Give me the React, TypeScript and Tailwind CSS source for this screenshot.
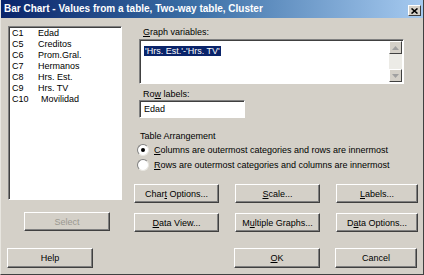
import type { ReactNode } from "react"

const columns = [
  { id: "C1", name: "Edad" },
  { id: "C5", name: "Creditos" },
  { id: "C6", name: "Prom.Gral." },
  { id: "C7", name: "Hermanos" },
  { id: "C8", name: "Hrs. Est." },
  { id: "C9", name: "Hrs. TV" },
  { id: "C10", name: "Movilidad" },
]

function Button({ children, className = "", disabled = false }: { children: ReactNode; className?: string; disabled?: boolean }) {
  return (
    <div
      className={`h-[19px] flex items-center justify-center border border-t-white border-l-white border-r-[#404040] border-b-[#404040] shadow-[inset_-1px_-1px_0_#808080] bg-[#d4d0c8] ${
        disabled ? "text-[#9a9890]" : "text-black"
      } ${className}`}
    >
      {children}
    </div>
  )
}

function Sunken({ children, className = "" }: { children?: ReactNode; className?: string }) {
  return (
    <div className={`border border-t-[#808080] border-l-[#808080] border-r-white border-b-white shadow-[inset_1px_1px_0_#404040] bg-white ${className}`}>
      {children}
    </div>
  )
}

function Radio({ checked }: { checked?: boolean }) {
  return (
    <div className="w-[12px] h-[12px] rounded-full bg-white border border-t-[#808080] border-l-[#808080] border-r-[#e8e6e0] border-b-[#e8e6e0] flex items-center justify-center">
      {checked && <div className="w-[4px] h-[4px] rounded-full bg-black" />}
    </div>
  )
}

function ScrollArrow({ up }: { up?: boolean }) {
  return (
    <div className="w-[13px] h-[13px] bg-[#d4d0c8] border border-t-white border-l-white border-r-[#404040] border-b-[#404040] flex items-center justify-center">
      <svg width="7" height="4" viewBox="0 0 7 4">
        <path d={up ? "M3.5 0 L7 4 L0 4 Z" : "M0 0 L7 0 L3.5 4 Z"} fill="#a0a0a0" />
      </svg>
    </div>
  )
}

export default function App() {
  return (
    <div className="w-[424px] h-[275px] bg-[#d4d0c8] font-['Liberation_Sans',Arial,sans-serif] text-[9px] leading-[12px] text-black flex flex-col overflow-hidden border-l border-l-[#e8e6e0] border-r border-r-[#404040] border-b border-b-[#404040]">
      {/* Title bar */}
      <div className="h-[18px] shrink-0 flex items-center pl-[3px] pr-[2px] bg-[linear-gradient(to_right,#0a246a,#3a6ea5_45%,#a6caf0)]">
        <span className="text-white font-bold text-[10px]">Bar Chart - Values from a table, Two-way table, Cluster</span>
        <div className="ml-auto mt-[3px] w-[13px] h-[11px] bg-[#d4d0c8] border border-t-white border-l-white border-r-[#404040] border-b-[#404040] flex items-center justify-center">
          <svg width="7" height="6" viewBox="0 0 7 6">
            <path d="M0.5 0.5 L6.5 5.5 M6.5 0.5 L0.5 5.5" stroke="black" strokeWidth="1.6" />
          </svg>
        </div>
      </div>

      <div className="flex pt-[8px]">
        {/* Left column */}
        <div className="ml-[7px] w-[114px] flex flex-col">
          <Sunken className="h-[174px] pt-[1px] pl-[3px]">
            {columns.map((c) => (
              <div key={c.id} className="flex h-[11px] leading-[11px]">
                <span className="w-[26px]">{c.id}</span>
                <span className={c.id === "C10" ? "ml-[3px]" : ""}>{c.name}</span>
              </div>
            ))}
          </Sunken>
          <Button disabled className="mt-[12px] ml-[16px] w-[86px]">Select</Button>
        </div>

        {/* Right column */}
        <div className="ml-[12px] flex flex-col">
          <div className="pl-[9px] h-[12px]">
            <span className="underline">G</span>raph variables:
          </div>
          <Sunken className="ml-[5px] mt-[1px] w-[265px] h-[45px] flex">
            <div className="flex-1 pl-[4px] pt-[5px]">
              <span className="bg-[#0a246a] text-white px-[1px]">'Hrs. Est.'-'Hrs. TV'</span>
            </div>
            <div className="w-[13px] mt-[1px] mb-[1px] mr-[1px] flex flex-col justify-between bg-[#ecebe6]">
              <ScrollArrow up />
              <ScrollArrow />
            </div>
          </Sunken>
          <div className="pl-[9px] mt-[4px] h-[12px]">
            Ro<span className="underline">w</span> labels:
          </div>
          <Sunken className="ml-[5px] w-[106px] h-[18px] pl-[4px] flex items-center">Edad</Sunken>
          <div className="pl-[6px] mt-[12px] h-[12px]">Table Arrangement</div>
          <div className="pl-[3px] mt-[2px] h-[12px] flex items-center gap-[5px]">
            <Radio checked />
            <span>
              <span className="underline">C</span>olumns are outermost categories and rows are innermost
            </span>
          </div>
          <div className="pl-[3px] mt-[3px] h-[12px] flex items-center gap-[5px]">
            <Radio />
            <span>
              <span className="underline">R</span>ows are outermost categories and columns are innermost
            </span>
          </div>

          <div className="mt-[13px] grid grid-cols-[85px_85px_82px] gap-x-[16px] gap-y-[10px]">
            <Button>
              Char<span className="underline">t</span>&nbsp;Options...
            </Button>
            <Button>
              <span className="underline">S</span>cale...
            </Button>
            <Button>
              <span className="underline">L</span>abels...
            </Button>
            <Button>
              <span className="underline">D</span>ata View...
            </Button>
            <Button>
              M<span className="underline">u</span>ltiple Graphs...
            </Button>
            <Button>
              D<span className="underline">a</span>ta Options...
            </Button>
          </div>
        </div>
      </div>

      {/* Bottom row */}
      <div className="flex mt-[16px]">
        <Button className="ml-[6px] w-[86px] h-[20px]">Help</Button>
        <Button className="ml-[141px] w-[86px] h-[20px]">
          <span className="underline">O</span>K
        </Button>
        <Button className="ml-[15px] w-[82px] h-[20px]">Cancel</Button>
      </div>
    </div>
  )
}
